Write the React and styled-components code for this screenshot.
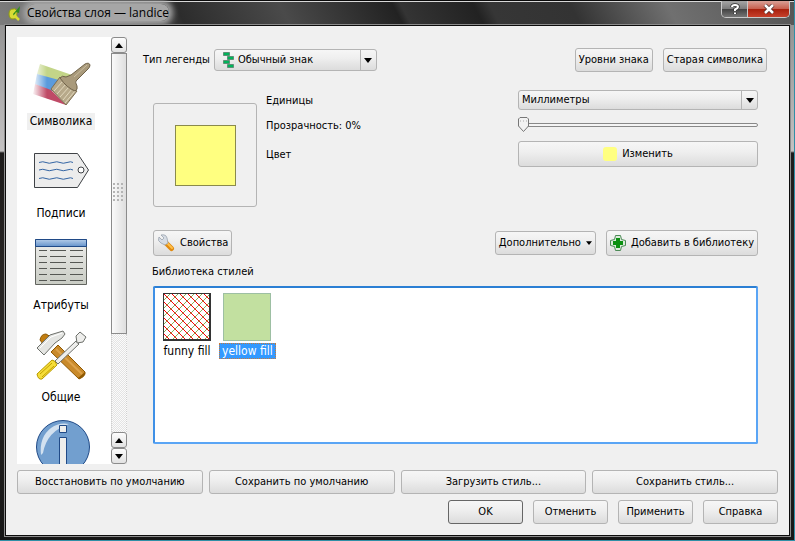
import React, { useState } from 'react';
import styled, { createGlobalStyle, css } from 'styled-components';

const Global = createGlobalStyle`
  * { box-sizing: border-box; }
  body { margin: 0; background: #101010; }
  button, select, input { font: inherit; color: inherit; margin: 0; }
`;

const uiFont = '"DejaVu Sans Condensed", "DejaVu Sans", sans-serif';
const raised = 'linear-gradient(#f6f6f6, #efefef 40%, #dcdcdc)';

const Frame = styled.div`
  min-height: 100vh;
  display: flex;
  flex-direction: column;
  padding: 0 4px 4px 5px;
  border: solid #2f8fa6;
  border-width: 0 1px 1px 0;
  background: linear-gradient(#8a8a8a, #c4c2c2 151px, #1d1b1b 153px, #2b2826 60%, #161616);
  font: 11px/14px ${uiFont};
  color: #000;
`;

const TitleBar = styled.header`
  display: flex;
  align-items: flex-start;
  gap: 6px;
  height: 25px;
  margin: 0 -4px 0 -5px;
  padding: 0 4px 0 8px;
  border-top: 1px solid #0a0a0a;
  box-shadow: inset 0 1px #d8d8d8;
  background: linear-gradient(62deg, #7c7c7c, #606060 16%, #2c2c2c 23%, #4a4a4a 36%, #222 50%, #343434 51%, #222 60%, #363636 62%, #333 72%, #707070 84%, #555);
`;

const Title = styled.h1`
  flex: 1;
  margin: 0;
  font: 12px/23px "Open Sans", "Noto Sans", sans-serif;
`;

const TitleGlow = styled.span`
  border-radius: 8px;
  background: #a6a6a6;
  box-shadow: 0 0 6px 4px #a6a6a6;
`;

const TitleIcon = styled.svg`
  width: 13px;
  height: 16px;
  margin-top: 4px;
  z-index: 1;
`;

const CaptionButtons = styled.div`
  display: flex;
  border: 1px solid #c9c9c9;
  border-top: 0;
  border-radius: 0 0 5px 5px;
  overflow: hidden;
`;

const CaptionButton = styled.button`
  display: grid;
  place-items: center;
  width: ${(p) => (p.$close ? 42 : 25)}px;
  height: 16px;
  padding: 0;
  border: 0;
  border-left: ${(p) => (p.$close ? '1px solid #c9c9c9' : '0')};
  background: ${(p) =>
    p.$close
      ? 'linear-gradient(#d9a096, #c8604f 48%, #a8200d 52%, #c6402b)'
      : 'linear-gradient(#a5a5a5, #7c7c7c 48%, #434343 52%, #757575)'};
`;

const Dialog = styled.main`
  flex: 1;
  display: flex;
  flex-direction: column;
  gap: 6px;
  padding: 11px;
  border: 1px solid #0c0c0c;
  box-shadow: 0 0 0 1px #8c8c8c;
  background: #f0f0f0;
`;

const MainRow = styled.div`
  flex: 1;
  display: flex;
  min-height: 0;
`;

const Sidebar = styled.nav`
  display: flex;
  width: 110px;
  background: #fff;
`;

const SideList = styled.div`
  flex: 1;
  height: 0;
  min-height: 100%;
  padding: 10px 6px 0 0;
  overflow: hidden;
`;

const SideItem = styled.button`
  display: flex;
  flex-direction: column;
  align-items: center;
  gap: 2px;
  width: 100%;
  height: 92px;
  padding: 0;
  border: 0;
  background: none;
`;

const SideIcon = styled.svg`
  width: 64px;
  height: 64px;
  flex: none;
`;

const SideLabel = styled.span`
  padding: 1px 3px;
  font-size: 12px;
  line-height: 15px;
  background: ${(p) => (p.$active ? '#f0f0f0' : 'transparent')};
`;

const ScrollBar = styled.div`
  display: flex;
  flex-direction: column;
  width: 16px;
  background: repeating-conic-gradient(#e4e4e4 0 25%, #fbfbfb 0 50%) 0 0 / 2px 2px;
`;

const ScrollButton = styled.button`
  display: grid;
  place-items: center;
  height: 16px;
  padding: 0;
  border: 1px solid #8b8b8b;
  border-radius: 3px;
  background: linear-gradient(#fdfdfd, #e2e2e2);
`;

const ScrollThumb = styled.div`
  flex: 280;
  display: grid;
  place-items: center;
  border: 1px solid #8b8b8b;
  background: linear-gradient(90deg, #fafafa, #dedede);
`;

const ScrollTrack = styled.div`
  flex: 99;
  border: dotted #cfcfcf;
  border-width: 0 1px;
`;

const Grip = styled.div`
  width: 12px;
  height: 20px;
  background: radial-gradient(circle at 1px 1px, #b4b4b4 1px, transparent 1px) 0 0 / 4px 4px;
`;

const Content = styled.section`
  flex: 1;
  display: flex;
  flex-direction: column;
  min-width: 0;
  padding: 11px 11px 20px 16px;
`;

const Row = styled.div`
  display: flex;
  align-items: center;
  gap: ${(p) => p.$gap || 10}px;
`;

const Spacer = styled.div`
  flex: 1;
`;

const Button = styled.button`
  display: inline-flex;
  align-items: center;
  justify-content: center;
  gap: 5px;
  height: ${(p) => (p.$tall ? 26 : 24)}px;
  padding: 0 3px;
  border: 1px solid ${(p) => (p.$primary ? '#666' : '#b4b4b4')};
  border-radius: 3px;
  background: ${raised};
  white-space: nowrap;
`;

const SelectBox = styled.div`
  position: relative;
  display: flex;
  align-items: center;
  height: ${(p) => (p.$tall ? 22 : 20)}px;
  width: ${(p) => p.$width || 'auto'};
  border: 1px solid #b4b4b4;
  border-radius: 3px;
  background: ${raised};
`;

const Select = styled.select`
  appearance: none;
  flex: 1;
  width: 100%;
  height: 100%;
  padding: 0 20px 0 ${(p) => (p.$icon ? 23 : 3)}px;
  border: 0;
  outline: 0;
  background: none;
`;

const SelectArrow = styled.span`
  position: absolute;
  top: 0;
  right: 0;
  bottom: 0;
  display: grid;
  place-items: center;
  width: 16px;
  border-left: 1px solid #b4b4b4;
  pointer-events: none;
`;

const SelectIcon = styled.svg`
  position: absolute;
  left: 7px;
  width: 13px;
  height: 16px;
  pointer-events: none;
`;

const Panel = styled.div`
  flex: 1;
  display: flex;
  flex-direction: column;
  padding: 18px 9px 0 10px;
`;

const SymbolArea = styled.div`
  display: grid;
  grid-template-columns: 104px 81fr 80fr;
  column-gap: 9px;
`;

const Preview = styled.div`
  display: grid;
  place-items: center;
  height: 104px;
  margin-top: 13px;
  border: 1px solid #b4b4b4;
  border-radius: 3px;
`;

const PreviewFill = styled.div`
  width: 61px;
  height: 61px;
  border: 1px solid #8a8a4c;
  background: #ffff80;
`;

const Labels = styled.div`
  display: grid;
  grid-template-rows: 22px 28px 30px;
  align-items: center;
  align-content: start;
`;

const Controls = styled.div`
  display: flex;
  flex-direction: column;
  gap: 7px;
`;

const thumb =
  "url(\"data:image/svg+xml,%3Csvg xmlns='http://www.w3.org/2000/svg' width='11' height='15'%3E%3Cpath d='M2 .5H9L10.500 2V9L5.500 14.500L.5 9V2Z' fill='%23f2f2f2' stroke='%23777'/%3E%3Cpath d='M2 4h1M5 4h1M8 4h1' stroke='%23aaa'/%3E%3C/svg%3E\")";

const Slider = styled.input`
  appearance: none;
  width: 100%;
  height: 15px;
  background: none;
  && { margin-bottom: 2px; }
  &::-webkit-slider-runnable-track {
    height: 4px;
    border: 1px solid #888;
    border-radius: 2px;
    background: #f4f4f4;
  }
  &::-webkit-slider-thumb {
    appearance: none;
    width: 11px;
    height: 15px;
    margin: -7px 0 0 -1px;
    background: ${thumb} no-repeat;
  }
`;

const Swatch = styled.span`
  width: 14px;
  height: 14px;
  border-radius: 3px;
  background: #ffff80;
`;

const ToolRow = styled(Row)`
  margin-top: 23px;
`;

const LibraryTitle = styled.h2`
  margin: 9px 0 7px -1px;
  font: inherit;
`;

const Library = styled.div`
  flex: 1;
  display: flex;
  align-items: flex-start;
  gap: 4px;
  padding: 5px 4px;
  border: 2px solid #5aa5f5;
  border-top-color: #2b7fd4;
  border-left-color: #3f90e6;
  border-radius: 2px;
  background: #fff;
`;

const StyleItem = styled.button`
  display: flex;
  flex-direction: column;
  align-items: center;
  gap: 2px;
  min-width: 56px;
  padding: 0;
  border: 0;
  background: none;
`;

const StyleSample = styled.svg`
  width: 48px;
  height: 48px;
`;

const StyleName = styled.span`
  padding: 0 2px;
  border: 1px solid transparent;
  font-size: 12px;
  line-height: 14px;
  ${(p) =>
    p.$selected &&
    css`
      border: 1px dotted #c87a3a;
      background: #3399ff;
      color: #fff;
    `}
`;

const StyleActions = styled.div`
  display: grid;
  grid-template-columns: repeat(4, 1fr);
  gap: 6px;
`;

const DialogActions = styled.div`
  display: flex;
  justify-content: flex-end;
  gap: 10px;
  & > button { width: 75px; }
`;

const Arrow = ({ up, small }) => (
  <svg width={small ? 6 : 8} height={small ? 4 : 5} viewBox="0 0 8 5" aria-hidden="true">
    <path d={up ? 'M4 0L8 5H0Z' : 'M0 0H8L4 5Z'} fill="#000" />
  </svg>
);

const BrushIcon = () => (
  <SideIcon viewBox="0 0 64 64">
    <defs>
      <linearGradient id="fade">
        <stop offset="0" stopColor="#fff" />
        <stop offset="1" stopColor="#fff" stopOpacity="0" />
      </linearGradient>
    </defs>
    <path d="M11 17L46 29L33 36L8 27Z" fill="#c3d588" />
    <path d="M8 27L30 33L22 45L6 37Z" fill="#5b9bdc" />
    <path d="M6 37L22 43L37 58L4 47Z" fill="#bf4a66" />
    <path d="M3 16H18V56H3Z" fill="url(#fade)" />
    <path d="M22 42L31 30Q40 41 48 44L37 58Z" fill="#b7a98a" stroke="#7c6d50" />
    <path d="M25 44L34 34M28 47L37 37M31 50L40 40M34 53L43 42M36 56L46 44" stroke="#e2d8bd" />
    <path d="M31 31Q33 28 37 30L42 28L56 17Q60 15 61 18Q61 20 59 22L47 34Q46 35 48 39Q49 43 46 44Q38 41 31 31Z" fill="#a99a7b" stroke="#70634a" />
    <path d="M45 30L58 18" stroke="#cabd9f" />
  </SideIcon>
);

const LabelIcon = () => (
  <SideIcon viewBox="0 0 64 64" fill="none">
    <path d="M5.500 14.500H48.500L59.500 31L48.500 48.500H5.500Z" fill="#ececec" stroke="#3f4246" />
    <circle cx="52" cy="31" r="3" fill="#fff" stroke="#3f4246" />
    {[23.5, 31, 39.5].map((y) => (
      <path key={y} d={`M10 ${y}q4 -1.500 7 0t7 0t7 0t7 0t6 0`} stroke="#3465a4" />
    ))}
  </SideIcon>
);

const TableIcon = () => (
  <SideIcon viewBox="0 0 64 64">
    <defs>
      <linearGradient id="sheet" x2="0" y2="1">
        <stop offset="0" stopColor="#eeeeec" />
        <stop offset="1" stopColor="#c9ccc4" />
      </linearGradient>
      <linearGradient id="head" x2="0" y2="1">
        <stop offset="0" stopColor="#b4cce8" />
        <stop offset="1" stopColor="#6593cb" />
      </linearGradient>
    </defs>
    <path d="M6.500 8.500H57.500V53.500H6.500Z" fill="url(#sheet)" stroke="#62645f" />
    <path d="M6.500 8.500H57.500V15.500H6.500Z" fill="url(#head)" stroke="#204a87" />
    {[19.5, 25.5, 31.5, 37.5, 43.5, 49.5].map((y) => (
      <path key={y} d={`M10 ${y}h8M21 ${y}h16M41 ${y}h13`} stroke="#555753" />
    ))}
  </SideIcon>
);

const ToolsIcon = () => (
  <SideIcon viewBox="0 0 64 64" strokeLinejoin="round">
    <path d="M11 17Q12 11 17 11L22 14L14 21Z" fill="#c17d11" stroke="#8f5902" />
    <path d="M22 29L29 22L56 49Q57 53 50 56Z" fill="#c98a2b" stroke="#8f5902" />
    <path d="M49 55L56 49Q57 53 50 56Z" fill="#8f5902" />
    <path d="M27 26L53 51" stroke="#dda24a" strokeWidth="2" />
    <path d="M8 25L21 12L34 8L36 11L33 15L26 20L15 32Z" fill="#e4e5e2" stroke="#6d706b" />
    <path d="M11 25L22 14L33 10" fill="none" stroke="#fff" />
    <path d="M26 38L47 18L50 21L29 41Z" fill="#eeeeec" stroke="#6d706b" />
    <path d="M47 13L51 9L57 14L54 19L48 20Z" fill="#eeeeec" stroke="#6d706b" />
    <path d="M8 51L23 37Q26 37 28 42L13 56Q9 57 8 51Z" fill="#f5dd38" stroke="#b89a00" />
    <path d="M11 51L23 40M13 54L25 43" stroke="#c4a000" />
  </SideIcon>
);

const InfoIcon = () => (
  <SideIcon viewBox="0 0 64 64">
    <circle cx="34" cy="32" r="26.500" fill="#729fcf" stroke="#204a87" />
    <path d="M12 40Q10 22 22 13Q30 7 40 9Q18 16 14 38Z" fill="#e3ecf6" opacity=".85" />
    <path d="M30.500 10.500H37.500V17.500H30.500ZM30.500 22.500H37.500V54H30.500Z" fill="#eeeeec" stroke="#204a87" />
  </SideIcon>
);

const sections = [
  { id: 'style', name: 'Символика', Icon: BrushIcon },
  { id: 'labels', name: 'Подписи', Icon: LabelIcon },
  { id: 'fields', name: 'Атрибуты', Icon: TableIcon },
  { id: 'general', name: 'Общие', Icon: ToolsIcon },
  { id: 'info', Icon: InfoIcon },
];

const WrenchIcon = () => (
  <svg width="18" height="18" viewBox="0 0 18 18" aria-hidden="true">
    <path d="M9 9L14.500 14.500" stroke="#e08a10" strokeWidth="5" strokeLinecap="round" />
    <path d="M9 8L15 14" stroke="#ffc04a" strokeWidth="2" strokeLinecap="round" />
    <path d="M2 3L5 6L7 4L4 1Q9 0 10 4L11 9L8 11L4 9Q0 7 2 3Z" fill="#d6dce4" stroke="#9aa3ad" strokeWidth=".8" />
  </svg>
);

const PlusIcon = () => (
  <svg width="16" height="16" viewBox="0 0 16 16" aria-hidden="true">
    <path d="M5.500 .5H10.500L11.500 4.500L15.500 5.500V10.500L11.500 11.500L10.500 15.500H5.500L4.500 11.500L.5 10.500V5.500L4.500 4.500Z" fill="#dcebdc" stroke="#4c8a56" strokeLinejoin="round" />
    <path d="M6 3H10V6H13V10H10V13H6V10H3V6H6Z" fill="#0a9010" />
  </svg>
);

const LegendIcon = () => (
  <SelectIcon viewBox="0 0 13 16" aria-hidden="true">
    <path d="M1.500 .5H7.500V3.500H1.500ZM5.500 4.500H11.500V7.500H5.500ZM1.500 8.500H7.500V11.500H1.500ZM5.500 12.500H11.500V15.500H5.500Z" fill="#00b45a" stroke="#5c8f74" />
  </SelectIcon>
);

const HatchSample = () => (
  <StyleSample viewBox="0 0 48 48">
    <defs>
      <pattern id="hatch" width="8" height="8" patternUnits="userSpaceOnUse">
        <path d="M-1 9L9 -1" stroke="#6a9a30" strokeWidth=".8" />
        <path d="M-1 -1L9 9" stroke="#f00" />
      </pattern>
    </defs>
    <rect width="48" height="48" fill="#fff" />
    <rect width="48" height="48" fill="url(#hatch)" />
    <path d="M0 .5H47M.5 0V47" stroke="#333" />
    <path d="M0 47H47V0" fill="none" stroke="#333" strokeWidth="2" />
  </StyleSample>
);

const GreenSample = () => (
  <StyleSample viewBox="0 0 48 48">
    <rect x=".5" y=".5" width="47" height="47" fill="#c2e0a0" stroke="#9dbfa3" />
  </StyleSample>
);

const library = [
  ['funny fill', HatchSample],
  ['yellow fill', GreenSample],
];

export default function App() {
  const [section, setSection] = useState('style');
  const [style, setStyle] = useState(1);
  const [alpha, setAlpha] = useState(0);

  return (
    <Frame>
      <Global />
      <TitleBar>
        <TitleIcon viewBox="0 0 13 16" aria-hidden="true">
          <path d="M1 9Q1 4 5 4Q9 3 9 8Q9 14 5 14Q1 14 1 9Z" fill="#d9dc35" stroke="#8f9a12" />
          <path d="M5 9L12 1L11 8L8 7L6 11Z" fill="#2f8a20" />
          <path d="M6 10L11 15" stroke="#d9dc35" strokeWidth="2.500" />
        </TitleIcon>
        <Title><TitleGlow>Свойства слоя — landice</TitleGlow></Title>
        <CaptionButtons>
          <CaptionButton aria-label="Справка по окну">
            <svg width="10" height="12" viewBox="0 0 10 12">
              <path d="M2 4Q2 2 5 2Q8 2 8 4Q8 5 5 6.500V8M5 9.500V11" fill="none" stroke="#333" strokeWidth="3.500" />
              <path d="M2 4Q2 2 5 2Q8 2 8 4Q8 5 5 6.500V8M5 9.500V11" fill="none" stroke="#fff" strokeWidth="2" />
            </svg>
          </CaptionButton>
          <CaptionButton $close aria-label="Закрыть">
            <svg width="12" height="10" viewBox="0 0 12 10">
              <path d="M2 1L10 9M10 1L2 9" stroke="#4a2a2a" strokeWidth="4" />
              <path d="M2 1L10 9M10 1L2 9" stroke="#fff" strokeWidth="2.500" />
            </svg>
          </CaptionButton>
        </CaptionButtons>
      </TitleBar>

      <Dialog>
        <MainRow>
          <Sidebar>
            <SideList>
              {sections.map(({ id, name, Icon }) => (
                <SideItem key={id} aria-label={name || id} onClick={() => setSection(id)}>
                  <Icon />
                  {name && <SideLabel $active={id === section}>{name}</SideLabel>}
                </SideItem>
              ))}
            </SideList>
            <ScrollBar>
              <ScrollButton aria-label="Вверх"><Arrow up /></ScrollButton>
              <ScrollThumb><Grip /></ScrollThumb>
              <ScrollTrack />
              <ScrollButton aria-label="Выше"><Arrow up /></ScrollButton>
              <ScrollButton aria-label="Вниз"><Arrow /></ScrollButton>
            </ScrollBar>
          </Sidebar>

          <Content>
            <Row $gap={4}>
              <label htmlFor="legend">Тип легенды</label>
              <SelectBox $tall $width="163px">
                <LegendIcon />
                <Select id="legend" $icon>
                  <option>Обычный знак</option>
                </Select>
                <SelectArrow><Arrow /></SelectArrow>
              </SelectBox>
              <Spacer />
              <Row $gap={10}>
                <Button>Уровни знака</Button>
                <Button>Старая символика</Button>
              </Row>
            </Row>

            <Panel>
              <SymbolArea>
                <Preview><PreviewFill /></Preview>
                <Labels>
                  <label htmlFor="units">Единицы</label>
                  <label htmlFor="alpha">Прозрачность: {alpha}%</label>
                  <label htmlFor="color">Цвет</label>
                </Labels>
                <Controls>
                  <SelectBox>
                    <Select id="units">
                      <option>Миллиметры</option>
                    </Select>
                    <SelectArrow><Arrow /></SelectArrow>
                  </SelectBox>
                  <Slider
                    id="alpha"
                    type="range"
                    min="0"
                    max="100"
                    value={alpha}
                    onChange={(e) => setAlpha(e.target.value)}
                  />
                  <Button id="color" $tall><Swatch />Изменить</Button>
                </Controls>
              </SymbolArea>

              <ToolRow>
                <Button $tall><WrenchIcon />Свойства</Button>
                <Spacer />
                <Button>Дополнительно <Arrow small /></Button>
                <Button $tall><PlusIcon />Добавить в библиотеку</Button>
              </ToolRow>

              <LibraryTitle>Библиотека стилей</LibraryTitle>
              <Library>
                {library.map(([name, Sample], i) => (
                  <StyleItem key={name} onClick={() => setStyle(i)}>
                    <Sample />
                    <StyleName $selected={i === style}>{name}</StyleName>
                  </StyleItem>
                ))}
              </Library>
            </Panel>
          </Content>
        </MainRow>

        <StyleActions>
          <Button>Восстановить по умолчанию</Button>
          <Button>Сохранить по умолчанию</Button>
          <Button>Загрузить стиль...</Button>
          <Button>Сохранить стиль...</Button>
        </StyleActions>
        <DialogActions>
          <Button $primary>OK</Button>
          <Button>Отменить</Button>
          <Button>Применить</Button>
          <Button>Справка</Button>
        </DialogActions>
      </Dialog>
    </Frame>
  );
}
